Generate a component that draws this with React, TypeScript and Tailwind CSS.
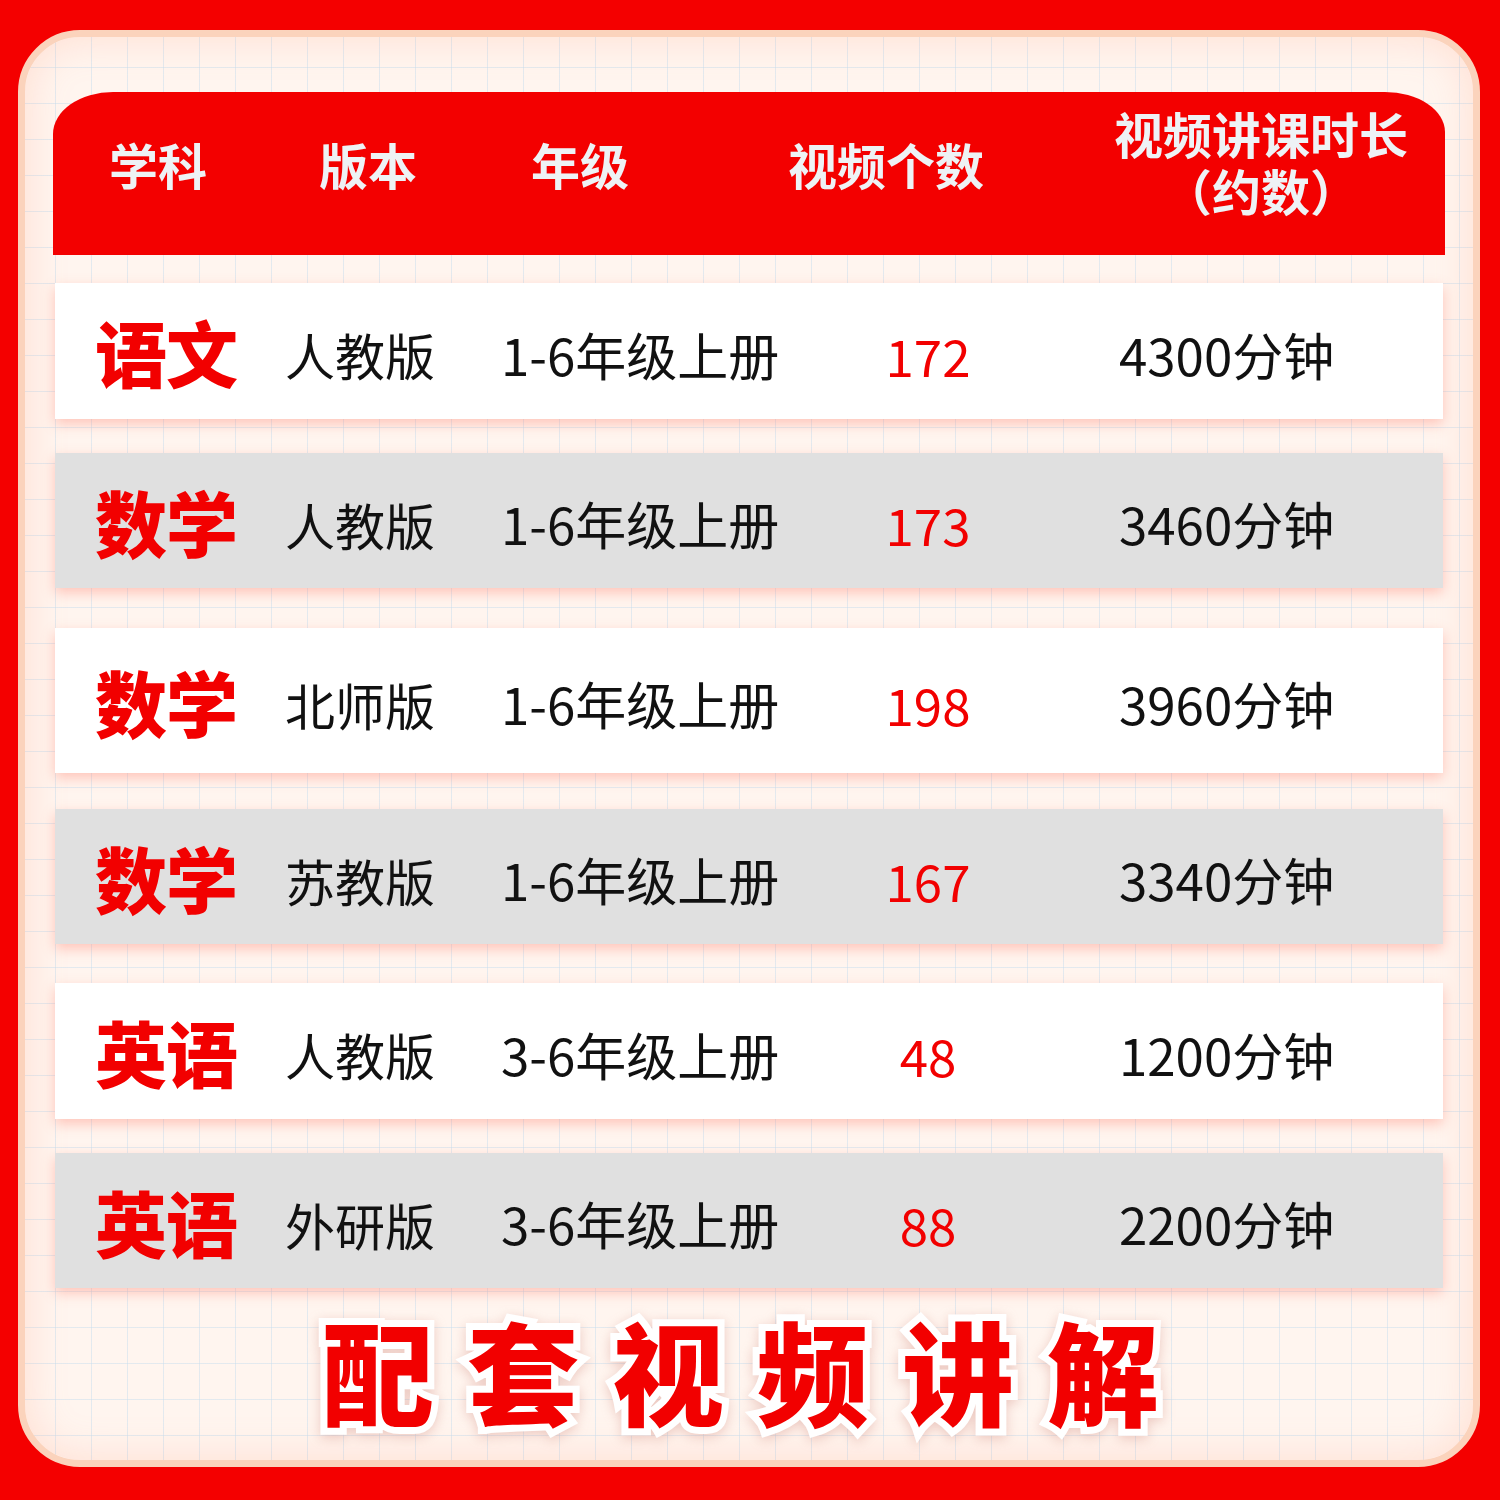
import React from 'react'

type Row = {
  subject: string
  edition: string
  grade: string
  count: string
  minutes: string
  gray: boolean
  mt: string
  h: string
}

const rows: Row[] = [
  { subject: '语文', edition: '人教版', grade: '1-6年级上册', count: '172', minutes: '4300分钟', gray: false, mt: 'mt-[28px]', h: 'h-[136px]' },
  { subject: '数学', edition: '人教版', grade: '1-6年级上册', count: '173', minutes: '3460分钟', gray: true, mt: 'mt-[34px]', h: 'h-[135px]' },
  { subject: '数学', edition: '北师版', grade: '1-6年级上册', count: '198', minutes: '3960分钟', gray: false, mt: 'mt-[40px]', h: 'h-[145px]' },
  { subject: '数学', edition: '苏教版', grade: '1-6年级上册', count: '167', minutes: '3340分钟', gray: true, mt: 'mt-[36px]', h: 'h-[135px]' },
  { subject: '英语', edition: '人教版', grade: '3-6年级上册', count: '48', minutes: '1200分钟', gray: false, mt: 'mt-[39px]', h: 'h-[136px]' },
  { subject: '英语', edition: '外研版', grade: '3-6年级上册', count: '88', minutes: '2200分钟', gray: true, mt: 'mt-[34px]', h: 'h-[135px]' },
]

const font = "font-['Noto_Sans_CJK_SC','Noto_Sans',sans-serif]"

function TableRow({ row }: { row: Row }) {
  return (
    <div
      className={`${row.mt} ${row.h} mx-[2px] flex items-center pl-[40px] shadow-[0_5px_12px_rgba(255,110,90,0.35)] ${
        row.gray ? 'bg-[#e0e0e0]' : 'bg-white'
      }`}
    >
      <div className="w-[190px] text-[72px] leading-none font-black text-[#f20000] tracking-[-1px]">
        {row.subject}
      </div>
      <div className="w-[216px] pt-[6px] text-[50px] leading-none text-[#111]">{row.edition}</div>
      <div className="w-[346px] pt-[6px] text-[51px] leading-none text-[#111]">{row.grade}</div>
      <div className="w-[162px] pt-[8px] text-center text-[51px] leading-none text-[#f20000]">{row.count}</div>
      <div className="pl-[110px] pt-[6px] text-[51px] leading-none text-[#111]">{row.minutes}</div>
    </div>
  )
}

export default function App() {
  return (
    <div className={`w-[1500px] h-[1500px] bg-[#f40000] pt-[30px] pl-[18px] pr-[20px] pb-[33px] flex ${font}`}>
      <div className="flex-1 flex flex-col rounded-[62px] border-[7px] border-[#fbd3bc] bg-[#fff5ef] bg-[linear-gradient(to_right,rgba(200,222,238,0.5)_1px,transparent_1px),linear-gradient(to_bottom,rgba(200,222,238,0.5)_1px,transparent_1px)] bg-[size:36px_36px] bg-[position:30px_30px] shadow-[inset_0_0_40px_rgba(255,150,120,0.25)] px-[28px] pt-[55px] overflow-hidden">
        {/* header */}
        <div className="h-[163px] flex items-center pb-[20px] bg-[#f30000] rounded-tl-[60px_42px] rounded-tr-[60px_40px] text-[49px] leading-none font-bold text-[#eef2f5]">
          <div className="w-[210px] text-center">学科</div>
          <div className="w-[210px] text-center">版本</div>
          <div className="w-[214px] text-center">年级</div>
          <div className="w-[398px] text-center">视频个数</div>
          <div className="flex-1 pr-[8px] -mt-[6px] text-center leading-[57px]">
            视频讲课时长
            <br />
            （约数）
          </div>
        </div>

        {/* rows */}
        {rows.map((row, i) => (
          <TableRow key={i} row={row} />
        ))}

        {/* title */}
        <div className="flex-1 flex items-center justify-center pl-[16px] pb-[10px]">
          <span className="text-[112px] leading-none font-black tracking-[33px] text-[#f20000] [-webkit-text-stroke:14px_white] [paint-order:stroke_fill] drop-shadow-[0_3px_6px_rgba(200,120,110,0.35)]">
            配套视频讲解
          </span>
        </div>
      </div>
    </div>
  )
}
